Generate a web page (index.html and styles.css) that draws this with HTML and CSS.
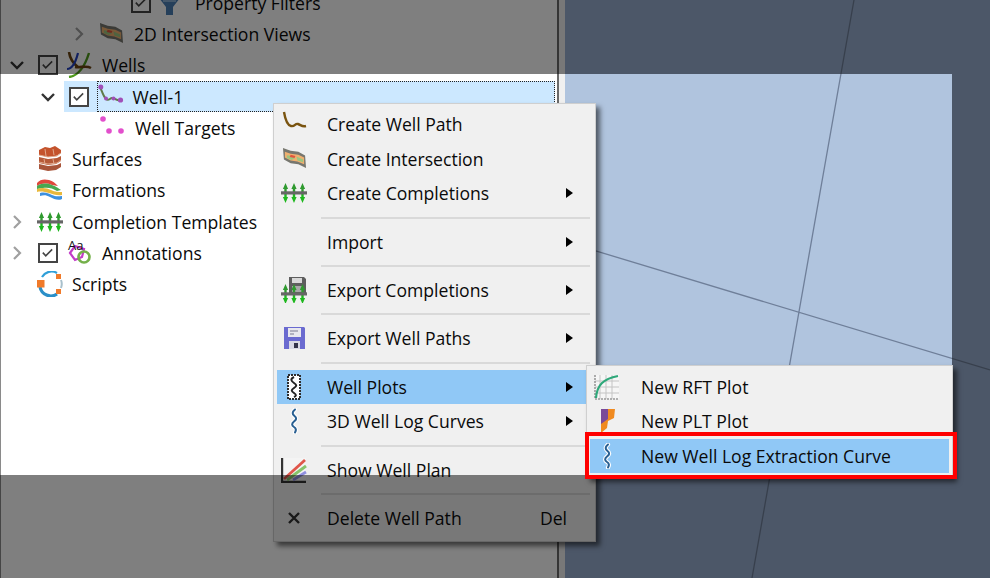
FILE: index.html
```html
<!DOCTYPE html>
<html lang="en">
<head>
<meta charset="utf-8">
<title>Well Plots menu</title>
<link rel="stylesheet" href="styles.css">
</head>
<body>
<svg class="defs" aria-hidden="true">
  <symbol id="i-completion" viewBox="0 0 26 26">
    <path d="M4.500 3l2.600 6H5.700v4H3.300V9H1.900zM13 3l2.600 6h-1.400v4h-2.400V9h-1.400zM21.500 3l2.600 6h-1.400v4h-2.400V9h-1.400z" fill="#2f9a2f"/>
    <path d="M4.500 23l2.600-6H5.700v-4H3.300v4H1.900zM13 23l2.600-6h-1.400v-4h-2.400v4h-1.400zM21.500 23l2.600-6h-1.400v-4h-2.400v4h-1.400z" fill="#1fb81f"/>
    <rect x="0" y="11.300" width="26" height="3.200" fill="#666"/>
  </symbol>
  <symbol id="i-log" viewBox="0 0 16 26">
    <path d="M9 1.500C6 4 6 6 8.500 8s2 3.500-.5 5.500-2.500 4 0 5.500 2.500 3 1 5.500" fill="none" stroke="#fff" stroke-width="4.200" stroke-linecap="round"/>
    <path d="M9 1.500C6 4 6 6 8.500 8s2 3.500-.5 5.500-2.500 4 0 5.500 2.500 3 1 5.500" fill="none" stroke="#2a6092" stroke-width="2" stroke-linecap="round"/>
  </symbol>
  <symbol id="i-curtain" viewBox="0 0 26 26">
    <path d="M1 2l8 3 8 1 7 4 1 13-8-4-8-1-7-4z" fill="#77776f"/>
    <path d="M3 6l6 2 8 1 6 3v7l-7-3-7-1-6-3z" fill="#f0b070"/>
    <path d="M5 9.500l6 1 3 2-4 2-5-2zM15 11l7 3v3l-6-2z" fill="#9cc680"/>
    <path d="M9 9l5 1.500-1 2-5-1z" fill="#e2553c"/>
  </symbol>
</svg>

<div class="page">
  <section class="tree">
    <div class="row l3">
      <span class="chev"></span>
      <span class="check"><svg viewBox="0 0 20 20"><path d="M3.500 9.500l3.700 4 8-8" class="tick"/></svg></span>
      <span class="ico"><svg width="21" height="26" viewBox="0 0 21 26"><path d="M0 0h21v8l-7 9v8H7v-8L0 8z" fill="#4a7eb5"/><path d="M4 11h13" stroke="#c8ddf0"/></svg></span>
      <span>Property Filters</span>
    </div>
    <div class="row l2">
      <span class="chev"><svg viewBox="0 0 12 14"><path d="M3 1l6 6-6 6" class="right"/></svg></span>
      <span class="ico"><svg width="25" height="25"><use href="#i-curtain"/></svg></span>
      <span>2D Intersection Views</span>
    </div>
    <div class="row l0">
      <span class="chev"><svg viewBox="0 0 14 12"><path d="M1 3l6 6 6-6" class="down"/></svg></span>
      <span class="check"><svg viewBox="0 0 20 20"><path d="M3.500 9.500l3.700 4 8-8" class="tick"/></svg></span>
      <span class="ico"><svg width="26" height="26" viewBox="0 0 26 26"><path d="M3 0c1 7 5 12 9 15" fill="none" stroke="#6a4310" stroke-width="2.600"/><path d="M1 17c6 0 9-8 11-16" fill="none" stroke="#2340c0" stroke-width="2.200"/><path d="M3 25c8-1 15-8 20-24" fill="none" stroke="#4f9a1c" stroke-width="2.400"/><path d="M9 15c6 1 11-2 16 1" fill="none" stroke="#6a4310" stroke-width="2.600"/></svg></span>
      <span>Wells</span>
    </div>
    <div class="row l1">
      <span class="chev"><svg viewBox="0 0 14 12"><path d="M1 3l6 6 6-6" class="down"/></svg></span>
      <div class="sel">
        <span class="check"><svg viewBox="0 0 20 20"><path d="M3.500 9.500l3.700 4 8-8" class="tick"/></svg></span>
        <div class="focus">
          <span class="ico well"><svg width="26" height="26" viewBox="0 0 26 26"><path d="M2 3c2 4 3 9 6 12s4-2 7-1 4 3 8 2" fill="none" stroke="#5f7a4a" stroke-width="2"/><circle cx="2.800" cy="3" r="2.500" fill="#a04fb8"/><circle cx="8" cy="14.500" r="2" fill="#a04fb8"/><circle cx="15.500" cy="14.500" r="2" fill="#a04fb8"/><circle cx="22.500" cy="16" r="2.600" fill="#a04fb8"/></svg></span>
          <span>Well-1</span>
        </div>
      </div>
    </div>
    <div class="row l2">
      <span class="chev"></span>
      <span class="ico wide"><svg width="26" height="26" viewBox="0 0 26 26"><circle cx="4" cy="4" r="2.800" fill="#e24fcc"/><circle cx="10" cy="16" r="2.800" fill="#e24fcc"/><circle cx="22" cy="16" r="2.800" fill="#e24fcc"/></svg></span>
      <span>Well Targets</span>
    </div>
    <div class="row l0">
      <span class="chev"></span>
      <span class="ico"><svg width="26" height="26" viewBox="0 0 26 26"><path d="M2 4l6-3 5 1 5-2 6 4v3l-5 3-8 1-9-2z" fill="#c4532c"/><path d="M2 11l9 2 9-1 4-2v5l-5 3-8 1-9-2z" fill="#b65a38"/><path d="M2 18l9 2 9-1 4-2v4l-5 3-8 1-9-2z" fill="#a8553a"/><path d="M2 9l9 2 9-1 4-3M2 16l9 2 9-1 4-3M8 3l1 7M16 3l1 6M7 13l1 5M16 13l1 5" stroke="#e0a88c" fill="none"/></svg></span>
      <span>Surfaces</span>
    </div>
    <div class="row l0">
      <span class="chev"></span>
      <span class="ico"><svg width="26" height="26" viewBox="0 0 26 26"><path d="M0 6c3-4 8-4 12-3s6 3 9 6l-6-1C10 6 5 6 0 9z" fill="#e0483c"/><path d="M0 9c5-3 10-3 15-1s6 3 9 5l-4 1c-4-3-10-4-14-3l-6 1z" fill="#48a850"/><path d="M0 12c5-2 10-1 14 1s8 2 11 2v3c-5 1-9-1-13-2s-8-2-12-1z" fill="#e8b83c"/><path d="M3 16c5-1 8 0 12 2s7 1 10 1v3c-4 2-8 0-12-2s-6-2-10-1z" fill="#3c90e0"/></svg></span>
      <span>Formations</span>
    </div>
    <div class="row l0">
      <span class="chev"><svg viewBox="0 0 12 14"><path d="M3 1l6 6-6 6" class="right"/></svg></span>
      <span class="ico"><svg width="26" height="26"><use href="#i-completion"/></svg></span>
      <span>Completion Templates</span>
    </div>
    <div class="row l0">
      <span class="chev"><svg viewBox="0 0 12 14"><path d="M3 1l6 6-6 6" class="right"/></svg></span>
      <span class="check"><svg viewBox="0 0 20 20"><path d="M3.500 9.500l3.700 4 8-8" class="tick"/></svg></span>
      <span class="ico"><svg class="anno" width="26" height="28" viewBox="0 0 26 28"><path d="M4 14l5-7 9 3-2 8-7 3z" fill="none" stroke="#c23cc8" stroke-width="2.200"/><circle cx="18" cy="18" r="5.500" fill="none" stroke="#74b04a" stroke-width="2.600"/><text x="2" y="11" class="aa">Aa</text></svg></span>
      <span>Annotations</span>
    </div>
    <div class="row l0">
      <span class="chev"></span>
      <span class="ico"><svg width="26" height="26" viewBox="0 0 26 26"><path d="M5 6a11 11 0 0 1 15-4" fill="none" stroke="#2f9fd8" stroke-width="2.200"/><path d="M24 9a11 11 0 0 1 0 8" fill="none" stroke="#a8c0cc" stroke-width="2"/><path d="M20 23A11 11 0 0 1 3 16" fill="none" stroke="#2a8fc8" stroke-width="3.200"/><rect x="0" y="9" width="7.500" height="7.500" fill="#f07a2a"/><rect x="19" y="3" width="5" height="5" fill="#f07a2a"/><rect x="19" y="18" width="5" height="5" fill="#f07a2a"/></svg></span>
      <span>Scripts</span>
    </div>
  </section>

  <div class="splitter"></div>

  <section class="canvas">
    <div class="lit"></div>
    <svg class="grid" viewBox="0 0 425 578" aria-hidden="true">
      <path d="M289 0L187 578M0 241.600L425 370"/>
    </svg>
  </section>

  <nav class="menu main">
    <div class="item"><span class="mi"><svg width="26" height="26" viewBox="0 0 26 26"><path d="M3 1c1 6 3 13 7 14s4-3 7-2 4 3 8 2" fill="none" stroke="#7a5410" stroke-width="2.400"/></svg></span><span class="lbl">Create Well Path</span></div>
    <div class="item"><span class="mi"><svg width="25" height="25"><use href="#i-curtain"/></svg></span><span class="lbl">Create Intersection</span></div>
    <div class="item"><span class="mi"><svg width="26" height="26"><use href="#i-completion"/></svg></span><span class="lbl">Create Completions</span><i class="arrow"></i></div>
    <hr class="sep">
    <div class="item"><span class="mi"></span><span class="lbl">Import</span><i class="arrow"></i></div>
    <hr class="sep">
    <div class="item"><span class="mi"><svg width="26" height="26" viewBox="0 0 26 26"><path d="M8 0h15l2 2v14H8z" fill="#5e5e5e"/><rect x="11" y="1" width="10" height="5" fill="#d8d8d8"/><rect x="11" y="9" width="11" height="6" fill="#a8a8a8"/><use href="#i-completion" width="26" height="26" y="4"/></svg></span><span class="lbl">Export Completions</span><i class="arrow"></i></div>
    <hr class="sep">
    <div class="item"><span class="mi"><svg width="24" height="24" viewBox="0 0 24 24"><path d="M2 1h20l1 1v21H2z" fill="#6a6ad0"/><rect x="6" y="2" width="13" height="9" fill="#e8e8ee"/><path d="M8 5h8M8 8h4" stroke="#7a7a90"/><rect x="7" y="15" width="11" height="8" fill="#d8d8e4"/><rect x="12" y="17" width="4" height="5" fill="#33334a"/></svg></span><span class="lbl">Export Well Paths</span><i class="arrow"></i></div>
    <hr class="sep">
    <div class="item active"><span class="mi"><svg width="14" height="26" viewBox="0 0 14 26"><rect x="1" y="1" width="12" height="24" fill="#fff" stroke="#2e2e2e" stroke-width="2" stroke-dasharray="2 1"/><path d="M7 3C3 5 4 7 7 9s3 3 0 5-3 3 0 5 2 3 0 4" fill="none" stroke="#222" stroke-width="2"/></svg></span><span class="lbl">Well Plots</span><i class="arrow"></i></div>
    <div class="item"><span class="mi"><svg width="16" height="26"><use href="#i-log"/></svg></span><span class="lbl">3D Well Log Curves</span><i class="arrow"></i></div>
    <hr class="sep">
    <div class="item"><span class="mi"><svg width="26" height="26" viewBox="0 0 26 26"><rect x="1" y="1" width="24" height="24" fill="#f4f4f4"/><path d="M1 1v24h24" fill="none" stroke="#333" stroke-width="2.400"/><path d="M3 22L24 3" stroke="#e0564a" stroke-width="2.800"/><path d="M6 23L25 9" stroke="#88c46c" stroke-width="2.800"/><path d="M12 23L25 15" stroke="#9090e0" stroke-width="2.800"/></svg></span><span class="lbl">Show Well Plan</span></div>
    <hr class="sep">
    <div class="item"><span class="mi"><svg width="14" height="14" viewBox="0 0 14 14"><path d="M2 2l10 10M12 2L2 12" stroke="#333" stroke-width="2.400"/></svg></span><span class="lbl">Delete Well Path</span><span class="key">Del</span></div>
  </nav>

  <div class="spot"></div>

  <nav class="menu sub">
    <div class="item"><span class="mi"><svg width="26" height="26" viewBox="0 0 26 26"><path d="M1 1h24v24H1z" fill="#f6f6f6"/><path d="M6 1v24M12 1v24M18 1v24M1 7h24M1 13h24M1 19h24" stroke="#c4c4c4"/><path d="M1 1v24h24" fill="none" stroke="#999" stroke-dasharray="2 1" stroke-width="1.600"/><path d="M2 24C3 11 9 5 24 2" fill="none" stroke="#2ea87a" stroke-width="2.200"/></svg></span><span class="lbl">New RFT Plot</span></div>
    <div class="item"><span class="mi"><svg width="16" height="26" viewBox="0 0 16 26"><path d="M2 1h14l-1 9-6 3-1 7-6 5z" fill="#f08a20"/><path d="M2 1h7v10l-7 5z" fill="#7a4a98"/></svg></span><span class="lbl">New PLT Plot</span></div>
    <div class="item active"><span class="mi"><svg width="16" height="26"><use href="#i-log"/></svg></span><span class="lbl">New Well Log Extraction Curve</span></div>
  </nav>

  <div class="redbox"></div>
</div>
</body>
</html>
```

FILE: styles.css
```css
* { box-sizing: border-box; }
html, body { margin: 0; padding: 0; }
body {
  font-family: "Open Sans", "Noto Sans", sans-serif;
  font-size: 17.6px;
  color: #0a0a0a;
  background: #fff;
}
.defs { position: absolute; width: 0; height: 0; }
.page {
  position: relative;
  display: flex;
  width: 990px;
  height: 578px;
  overflow: hidden;
}

/* tree panel */
.tree {
  width: 557px;
  flex: none;
  background: #fff;
  border-left: 1px solid #8a8a8a;
  margin-top: -13px;
}
.row {
  display: flex;
  align-items: center;
  height: 31.300px;
  white-space: nowrap;
}
.l0 { padding-left: 1px; }
.l1 { padding-left: 32px; }
.l2 { padding-left: 63px; }
.l3 { padding-left: 94px; }
.chev {
  width: 31px;
  flex: none;
  display: flex;
  justify-content: center;
  align-items: center;
  padding-right: 2px;
}
.chev svg { width: 14px; height: 14px; }
.right { fill: none; stroke: #a0a0a0; stroke-width: 2.200; }
.down { fill: none; stroke: #333; stroke-width: 2.400; }
.check {
  width: 20px;
  height: 20px;
  flex: none;
  margin: 0 8px 0 5px;
  border: 2px solid #444;
  background: #fff;
  display: flex;
}
.tick { fill: none; stroke: #444; stroke-width: 2; }
.ico {
  width: 36px;
  flex: none;
  display: flex;
  align-items: center;
}
.row > .chev + .ico { margin-left: 4px; width: 35px; }
.row > .chev + .ico.wide { width: 36px; }
.well { width: 34.500px; }
.anno { overflow: visible; }
.aa { font-family: "Open Sans", sans-serif; font-size: 13px; fill: #111; }
.sel {
  flex: 1;
  display: flex;
  align-items: center;
  height: 31px;
  margin-right: 2px;
  background: #cce8ff;
}
.focus {
  flex: 1;
  display: flex;
  align-items: center;
  height: 31px;
  border: 1.500px dotted #222;
}

/* splitter */
.splitter {
  width: 8px;
  flex: none;
  background: #f0f0f0;
  border-left: 2px solid #6a6a6a;
}

/* viewer */
.canvas {
  position: relative;
  flex: 1;
  background: #98aed0;
}
.lit {
  position: absolute;
  top: 74px;
  bottom: 103px;
  left: 0;
  right: 38px;
  background: #b0c4de;
}
.grid {
  position: absolute;
  inset: 0;
  width: 100%;
  height: 100%;
}
.grid path { fill: none; stroke: #6f7f99; stroke-width: 1.300; }

/* menus */
.menu {
  position: absolute;
  background: #f0f0f0;
  border: 1.500px solid #cfcfcf;
  box-shadow: 4px 4px 5px rgba(0, 0, 0, .55);
}
.main {
  left: 273px;
  top: 103px;
  width: 323px;
  height: 439px;
  padding: 3px 3px;
}
.sub {
  left: 586px;
  top: 365px;
  width: 367px;
  height: 113px;
  padding: 3.500px 3px 0;
  z-index: 2;
}
.item {
  display: flex;
  align-items: center;
  height: 34.500px;
  white-space: nowrap;
}
.active { background: #90c8f6; }
.mi {
  width: 50px;
  flex: none;
  display: flex;
  justify-content: center;
  align-items: center;
  padding-right: 16px;
}
.sub .mi { width: 51px; padding-right: 18px; }
.lbl { flex: 1; }
.arrow {
  width: 0;
  height: 0;
  margin-right: 19px;
  border-left: 7px solid #000;
  border-top: 5.500px solid transparent;
  border-bottom: 5.500px solid transparent;
}
.key { margin-right: 25px; }
.sep {
  height: 2px;
  margin: 6px 2px 5.900px 44px;
  border: 0;
  background: #d9d9d9;
}

/* spotlight dimming */
.spot {
  position: absolute;
  left: 0;
  top: 74px;
  width: 952px;
  height: 401px;
  box-shadow: 0 0 0 1200px rgba(0, 0, 0, .5);
}
.redbox {
  position: absolute;
  left: 585px;
  top: 432px;
  width: 372px;
  height: 47px;
  border: 4px solid #f00;
  z-index: 3;
}
```
